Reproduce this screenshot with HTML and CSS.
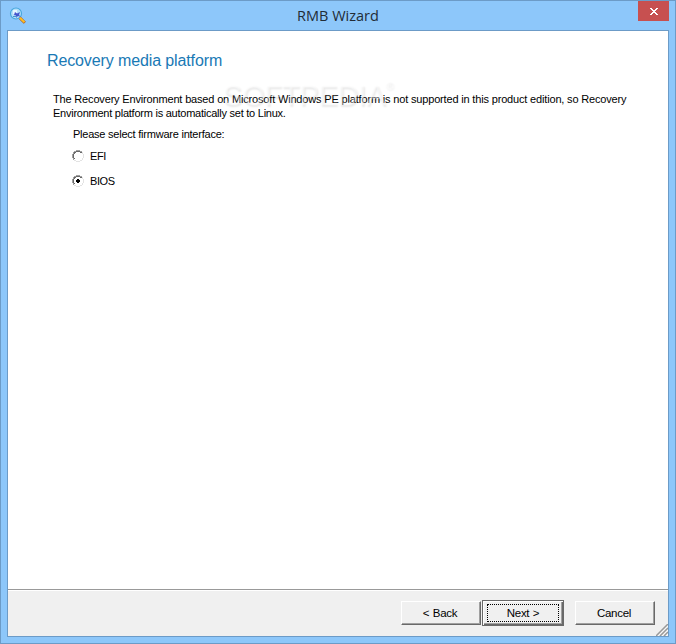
FILE: index.html
```html
<!DOCTYPE html>
<html lang="en">
<head>
<meta charset="utf-8">
<title>RMB Wizard</title>
<link rel="stylesheet" href="styles.css">
</head>
<body>
<div class="window">
  <header class="titlebar">
    <svg class="app-icon" width="18" height="18" viewBox="0 0 18 18">
      <circle cx="7" cy="6.500" r="5.500" fill="#b5e0fa" stroke="#48a7dc" stroke-width="1.200"/>
      <path d="M4 3h4v4H4z" fill="#e6f6ff"/>
      <path d="M6 5l2 1.500L11 5l-1 3 2 2-3-1-2 2V8.500L5 8z" fill="#4655cc"/>
      <path d="M4 9h4v1H4z" fill="#4b8fd0"/>
      <path d="M11 11l4.800 4.800" stroke="#a3562a" stroke-width="3"/>
      <path d="M10.800 10.800l4.700 4.500" stroke="#ffbd20" stroke-width="2"/>
    </svg>
    <h1 class="title">RMB Wizard</h1>
    <button class="close" aria-label="Close">
      <svg width="8" height="7" viewBox="0 0 8 7" shape-rendering="crispEdges"><path fill="#fff" d="M0 0h2v1H0zM6 0h2v1H6zM1 1h2v1H1zM5 1h2v1H5zM2 2h4v1H2zM3 3h2v1H3zM2 4h4v1H2zM1 5h2v1H1zM5 5h2v1H5zM0 6h2v1H0zM6 6h2v1H6z"/></svg>
    </button>
  </header>
  <div class="client">
    <main class="page">
      <h2 class="heading">Recovery media platform</h2>
      <div class="notice">
        <p class="line line-first">The Recovery Environment based on Microsoft Windows PE platform is not supported in this product edition, so Recovery</p>
        <p class="line line-second">Environment platform is automatically set to Linux.</p>
        <div class="watermark">SOFTPEDIA<span class="mark">®</span></div>
      </div>
      <p class="prompt">Please select firmware interface:</p>
      <div class="option">
        <svg class="radio" width="12" height="12" viewBox="0 0 12 12" shape-rendering="crispEdges"><path fill="#a0a0a0" d="M4 0h4v1H4zM2 1h2v1H2zM8 1h2v1H8zM1 2h1v2H1zM0 4h1v4H0zM1 8h1v2H1z"/><path fill="#696969" d="M4 1h4v1H4zM2 2h2v1H2zM8 2h2v1H8zM2 3h1v1H2zM1 4h1v4H1zM2 8h1v1H2z"/><path fill="#e3e3e3" d="M10 2h1v2h-1zM11 4h1v4h-1zM10 8h1v2h-1zM8 10h2v1H8zM4 11h4v1H4zM2 10h2v1H2z"/></svg>
        <span class="efi">EFI</span>
      </div>
      <div class="option">
        <svg class="radio" width="12" height="12" viewBox="0 0 12 12" shape-rendering="crispEdges"><path fill="#a0a0a0" d="M4 0h4v1H4zM2 1h2v1H2zM8 1h2v1H8zM1 2h1v2H1zM0 4h1v4H0zM1 8h1v2H1z"/><path fill="#696969" d="M4 1h4v1H4zM2 2h2v1H2zM8 2h2v1H8zM2 3h1v1H2zM1 4h1v4H1zM2 8h1v1H2z"/><path fill="#e3e3e3" d="M10 2h1v2h-1zM11 4h1v4h-1zM10 8h1v2h-1zM8 10h2v1H8zM4 11h4v1H4zM2 10h2v1H2z"/><path fill="#000" d="M5 4h2v1H5zM4 5h4v2H4zM5 7h2v1H5z"/></svg>
        <span class="bios">BIOS</span>
      </div>
    </main>
    <footer class="footer">
      <button class="button">&lt; Back</button>
      <button class="button default"><span class="focus">Next &gt;</span></button>
      <button class="button cancel">Cancel</button>
      <svg class="grip" width="12" height="12" viewBox="0 0 12 12"><path d="M0 12L12 0M4 12l8-8M8 12l4-4" stroke="#999" stroke-width="1.500"/><path d="M2 12L12 2M6 12l6-6M10 12l2-2" stroke="#fff" stroke-width=".6"/></svg>
    </footer>
  </div>
</div>
</body>
</html>
```
FILE: styles.css
```css
* { box-sizing: border-box; }
body { margin: 0; overflow: hidden; }
h1, h2, p { margin: 0; font-weight: 400; white-space: nowrap; }
.window {
  width: 676px;
  height: 644px;
  border: 1px solid #6c9bc7;
  background: #8dc7fa;
  padding: 0 6px 6px;
  font-family: "Liberation Sans", sans-serif;
  font-size: 11px;
  color: #000;
}
.titlebar {
  height: 29px;
  display: grid;
  grid-template-columns: 31px 1fr 31px;
  align-items: start;
}
.app-icon { margin: 6px 0 0 2px; }
.title {
  font-family: "Open Sans", sans-serif;
  font-size: 14.5px;
  line-height: 29px;
  text-align: center;
  color: #222c36;
}
.close {
  width: 31px;
  height: 20px;
  padding: 0;
  border: 0;
  background: #c75050;
  display: flex;
  align-items: center;
  justify-content: center;
}
.client {
  width: 662px;
  height: 607px;
  border: 1px solid #6c9bc7;
  background: #fff;
  display: flex;
  flex-direction: column;
}
.page { flex: 1; padding: 18px 0 0 39px; }
.heading { font-size: 16px; line-height: 24px; color: #1979b5; letter-spacing: -.12px; }
.notice { position: relative; margin: 19px 0 0 6px; }
.line { line-height: 14px; }
.line-first { letter-spacing: -.168px; }
.line-second { letter-spacing: -.245px; }
.watermark {
  position: absolute;
  left: 170px;
  top: -12px;
  font-size: 29px;
  line-height: 30px;
  color: rgba(255, 255, 255, .4);
  text-shadow: 1px 2px 2px rgba(0, 0, 0, .09);
  letter-spacing: -.2px;
  white-space: nowrap;
}
.mark { font-size: 11px; line-height: 1; position: relative; top: -16px; }
.prompt { margin: 7px 0 0 26px; line-height: 14px; letter-spacing: -.23px; }
.option { display: flex; align-items: center; gap: 6px; margin-left: 25px; height: 25px; }
.prompt + .option { margin-top: 2px; }
.efi, .bios { letter-spacing: -.4px; }
.footer {
  height: 47px;
  border-top: 1px solid #999;
  box-shadow: inset 0 1px #fff;
  background: #f0f0f0;
  display: flex;
  align-items: flex-start;
  justify-content: flex-end;
  padding-top: 10px;
  position: relative;
}
.button {
  width: 80px;
  height: 24px;
  margin-top: 1px;
  padding: 0 2px 0 0;
  border: 1px solid;
  border-color: #fff #696969 #696969 #fff;
  box-shadow: inset -1px -1px #a0a0a0;
  background: #f0f0f0;
  font: 11.5px/22px "Liberation Sans", sans-serif;
  letter-spacing: -.3px;
  word-spacing: .6px;
  color: #000;
}
.default {
  width: 82px;
  height: 26px;
  margin: 0 11px 0 1px;
  padding: 0;
  border-color: #696969;
  box-shadow: inset 1px 1px #fff, inset -1px -1px #696969, inset -2px -2px #a0a0a0;
}
.focus { display: block; margin: 0 4px; height: 18px; line-height: 16px; border: 1px dotted #000; }
.cancel { margin-right: 13px; }
.grip { position: absolute; right: 0; bottom: 0; }
```
